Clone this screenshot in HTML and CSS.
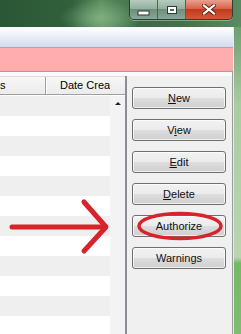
FILE: index.html
```html
<!DOCTYPE html>
<html lang="en">
<head>
<meta charset="UTF-8" />
<title>Records</title>
<link rel="stylesheet" href="styles.css">
</head>
<body>

<div class="window">
  <div class="titlebar">
    <div class="caption">
      <span class="cap cap-min">
        <svg width="14" height="6" viewBox="0 0 14 6"><rect x="1" y="1" width="11" height="4" fill="#fff" stroke="#2a3a34" stroke-width="1"/></svg>
      </span>
      <span class="cap cap-max">
        <svg width="12" height="10" viewBox="0 0 12 10"><rect x="1" y="1" width="10" height="8" fill="#2a3a34"/><rect x="2" y="2" width="8" height="6" fill="#fff"/><rect x="4" y="4" width="4" height="2" fill="#4e6a5e"/></svg>
      </span>
      <span class="cap cap-close">
        <svg width="14" height="11" viewBox="0 0 14 11"><path d="M2 1.5 L12 9.5 M12 1.5 L2 9.5" stroke="#5a2418" stroke-width="4" stroke-linecap="square"/><path d="M2 1.5 L12 9.5 M12 1.5 L2 9.5" stroke="#fff" stroke-width="2.2" stroke-linecap="square"/></svg>
      </span>
    </div>
  </div>

  <div class="frame">
    <div class="client">
      <div class="toolbar"></div>
      <div class="notice"></div>

      <div class="content">
        <div class="list">
          <div class="list-head">
            <div class="col col-a">s</div>
            <div class="col col-b">Date Crea</div>
            <div class="col col-fill"></div>
          </div>
          <div class="list-body">
            <div class="rows">
              <div class="row"></div><div class="row"></div><div class="row"></div>
              <div class="row"></div><div class="row"></div><div class="row"></div>
              <div class="row"></div><div class="row"></div><div class="row"></div>
              <div class="row"></div><div class="row"></div><div class="row"></div>
            </div>
            <div class="vscroll"><span class="arrow-up"></span></div>
          </div>
        </div>

        <div class="actions">
          <button class="btn"><u>N</u>ew</button>
          <button class="btn">V<u>i</u>ew</button>
          <button class="btn"><u>E</u>dit</button>
          <button class="btn"><u>D</u>elete</button>
          <button class="btn">Authorize</button>
          <button class="btn">Warnings</button>
        </div>
      </div>
    </div>
    <div class="frame-edge"></div>
  </div>
</div>

<!-- hand-drawn annotation over the screenshot -->
<svg class="markup" width="241" height="334" viewBox="0 0 241 334">
  <path d="M12 227 L104 227" stroke="#d7242b" stroke-width="5" stroke-linecap="round" fill="none"/>
  <path d="M84 202 L106 227 L84 251" stroke="#d7242b" stroke-width="5" stroke-linecap="round" stroke-linejoin="round" fill="none"/>
  <ellipse cx="180" cy="226" rx="41" ry="12.5" stroke="#d7242b" stroke-width="3.5" fill="none"/>
</svg>

</body>
</html>
```

FILE: styles.css
```css
/* Reset + basic */
* {
  box-sizing: border-box;
}
body {
  margin: 0;
  width: 241px;
  height: 334px;
  overflow: hidden;
  position: relative;
  font-family: "Liberation Sans", Arial, sans-serif;
  font-size: 11px;
  color: #000;
}

/* Window glass */
.window {
  display: flex;
  flex-direction: column;
  height: 334px;
  background:
    radial-gradient(ellipse 40px 18px at 100px 18px, rgba(140, 190, 140, 0.7), transparent),
    linear-gradient(90deg, #2c5736 0%, #31603b 30%, #5d8f61 42%, #3c6c45 58%, #41714a 75%, #5a8a60 100%);
}
.titlebar {
  height: 27px;
  display: flex;
  justify-content: flex-end;
  padding-right: 8px;
}
.caption {
  display: flex;
  height: 20px;
  border: 1px solid #2f3e38;
  border-top: none;
  border-radius: 0 0 5px 5px;
  overflow: hidden;
  box-shadow: 0 1px 0 rgba(255, 255, 255, 0.35);
}
.cap {
  display: flex;
  align-items: center;
  justify-content: center;
  height: 19px;
}
.cap-min,
.cap-max {
  width: 28px;
  border-right: 1px solid #4f645a;
  background: linear-gradient(#b5cbbd 0%, #94b0a0 45%, #6f8f7c 50%, #88a898 100%);
}
.cap-min svg {
  margin-top: 6px;
}
.cap-close {
  width: 46px;
  background: linear-gradient(#e9a090 0%, #d6644a 45%, #c23a1c 50%, #d2583a 100%);
}

/* Frame + client */
.frame {
  flex: 1;
  display: flex;
  min-height: 0;
}
.client {
  width: 234px;
  display: flex;
  flex-direction: column;
  background: #f0f0f0;
  border-right: 1px solid #e4ece4;
}
.frame-edge {
  flex: 1;
  background: linear-gradient(#6d9f70 0%, #a9cca2 25%, #b8d6b0 75%, #76b867 77%, #7fbd70 100%);
}
.toolbar {
  height: 21px;
  border-top: 2px solid #fff;
  background: linear-gradient(#fbfcfe, #d3dbee);
  border-bottom: 1px solid #a7a9ae;
}
.notice {
  height: 24px;
  background: #ffadad;
  border-bottom: 1px solid #a3a0a0;
}

/* Content area */
.content {
  flex: 1;
  display: flex;
  min-height: 0;
  padding-top: 4px;
  background: linear-gradient(#fafafa 0, #fafafa 4px, #f0f0f0 4px);
  border-right: 1px solid #9c9c9c;
}

/* List */
.list {
  width: 127px;
  display: flex;
  flex-direction: column;
  border-right: 2px solid #8d8d96;
  background: #fff;
}
.list-head {
  display: flex;
  height: 19px;
  border-top: 1px solid #dcdcdc;
  border-bottom: 1px solid #a0a0a0;
  background: linear-gradient(#f7f7f7, #ebebeb);
}
.col {
  line-height: 17px;
  white-space: nowrap;
  overflow: hidden;
}
.col-a {
  width: 46px;
  border-right: 1px solid #a0a0a0;
}
.col-b {
  width: 64px;
  border-left: 1px solid #fff;
  padding-left: 13px;
}
.col-fill {
  flex: 1;
}
.list-body {
  flex: 1;
  display: flex;
  min-height: 0;
  margin-top: 1px;
}
.rows {
  width: 110px;
  overflow: hidden;
}
.row {
  height: 20px;
  background: #fff;
}
.row:nth-child(odd) {
  background: #efefef;
}
.vscroll {
  flex: 1;
  background: #f3f3f3;
  display: flex;
  justify-content: center;
  padding-top: 6px;
}
.arrow-up {
  width: 0;
  height: 0;
  border-left: 3px solid transparent;
  border-right: 3px solid transparent;
  border-bottom: 3px solid #222;
}

/* Buttons */
.actions {
  flex: 1;
  display: flex;
  flex-direction: column;
  gap: 10px;
  padding: 11px 0 0 5px;
}
.btn {
  width: 94px;
  height: 22px;
  padding: 0;
  font-family: inherit;
  font-size: 11px;
  color: #111;
  border: 1px solid #707070;
  border-radius: 3px;
  background: linear-gradient(#f2f2f2 0%, #ebebeb 50%, #dddddd 51%, #cfcfcf 100%);
  box-shadow: inset 0 0 0 1px rgba(255, 255, 255, 0.7);
}

/* Annotation */
.markup {
  position: absolute;
  top: 0;
  left: 0;
  pointer-events: none;
}
```
